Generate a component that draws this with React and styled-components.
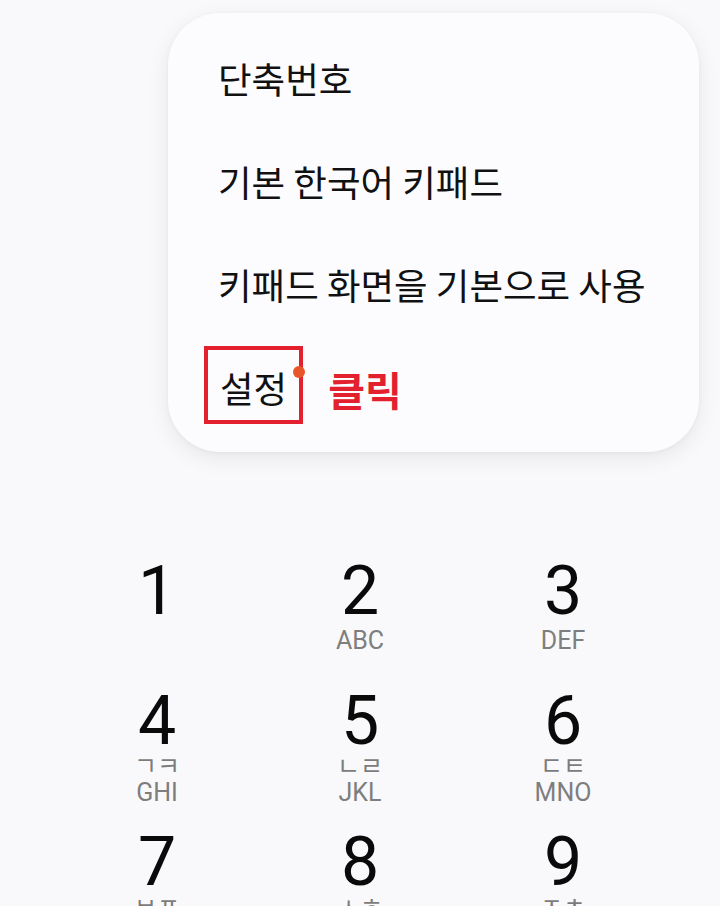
import styled, { createGlobalStyle } from 'styled-components';

const GlobalStyle = createGlobalStyle`
  html, body {
    margin: 0;
    padding: 0;
    background: #f9f9fb;
  }
  body {
    font-family: "Noto Sans CJK KR", "Noto Sans", sans-serif;
    color: #111;
  }
`;

const Screen = styled.div`
  width: 720px;
  height: 906px;
  overflow: hidden;
  background: #f9f9fb;
  display: flex;
  flex-direction: column;
  align-items: flex-end;

  & > * {
    flex-shrink: 0;
  }
`;

const Menu = styled.div`
  width: 531px;
  height: 439px;
  margin: 13px 21px 0 0;
  box-sizing: border-box;
  padding: 14px 0 0 50px;
  background: #fcfcfe;
  border-radius: 52px;
  box-shadow: 0 6px 22px rgba(0, 0, 0, 0.08), 0 1px 4px rgba(0, 0, 0, 0.04);
  display: flex;
  flex-direction: column;
`;

const MenuItem = styled.div`
  height: 103px;
  display: flex;
  align-items: center;
  gap: 25px;
  font-size: 36.5px;
  color: #111;
  white-space: nowrap;
`;

const Highlight = styled.span`
  position: relative;
  box-sizing: border-box;
  display: inline-flex;
  align-items: center;
  height: 78px;
  padding: 6px 12px 0 12px;
  margin: -6px 0 0 -14px;
  border: 4px solid #e3202e;
`;

const Dot = styled.span`
  position: absolute;
  top: 16px;
  right: -6px;
  width: 12px;
  height: 12px;
  border-radius: 50%;
  background: #e8552b;
`;

const Note = styled.span`
  color: #e3202e;
  font-weight: 700;
  font-size: 40px;
  margin-top: 2px;
`;

const Pad = styled.div`
  align-self: stretch;
  margin-top: 84px;
  display: grid;
  grid-template-columns: repeat(3, 203px);
  justify-content: center;
  grid-auto-rows: 141px;
`;

const Key = styled.div`
  display: flex;
  flex-direction: column;
  align-items: center;
  justify-content: center;
  font-family: Roboto, "Noto Sans CJK KR", sans-serif;
`;

const Digit = styled.div`
  font-size: 68px;
  font-weight: 400;
  line-height: 64px;
  color: #0a0a0a;
`;

const Jamo = styled.div`
  font-family: "Noto Sans CJK KR", sans-serif;
  font-size: 25px;
  line-height: 22px;
  height: 22px;
  color: #7c7c7c;
`;

const Letters = styled.div`
  font-size: 25px;
  line-height: 26px;
  margin-top: 5px;
  color: #7e7e7e;
`;

const keys = [
  { d: '1', l: '' },
  { d: '2', l: 'ABC' },
  { d: '3', l: 'DEF' },
  { d: '4', k: 'ㄱㅋ', l: 'GHI' },
  { d: '5', k: 'ㄴㄹ', l: 'JKL' },
  { d: '6', k: 'ㄷㅌ', l: 'MNO' },
  { d: '7', k: 'ㅂㅍ', l: 'PQRS' },
  { d: '8', k: 'ㅅㅎ', l: 'TUV' },
  { d: '9', k: 'ㅈㅊ', l: 'WXYZ' },
];

export default function App() {
  return (
    <Screen>
      <GlobalStyle />
      <Menu>
        <MenuItem>단축번호</MenuItem>
        <MenuItem>기본 한국어 키패드</MenuItem>
        <MenuItem>키패드 화면을 기본으로 사용</MenuItem>
        <MenuItem>
          <Highlight>
            설정
            <Dot />
          </Highlight>
          <Note>클릭</Note>
        </MenuItem>
      </Menu>
      <Pad>
        {keys.map((k) => (
          <Key key={k.d}>
            <Digit>{k.d}</Digit>
            {k.k && <Jamo>{k.k}</Jamo>}
            <Letters>{k.l || '\u00a0'}</Letters>
          </Key>
        ))}
      </Pad>
    </Screen>
  );
}
